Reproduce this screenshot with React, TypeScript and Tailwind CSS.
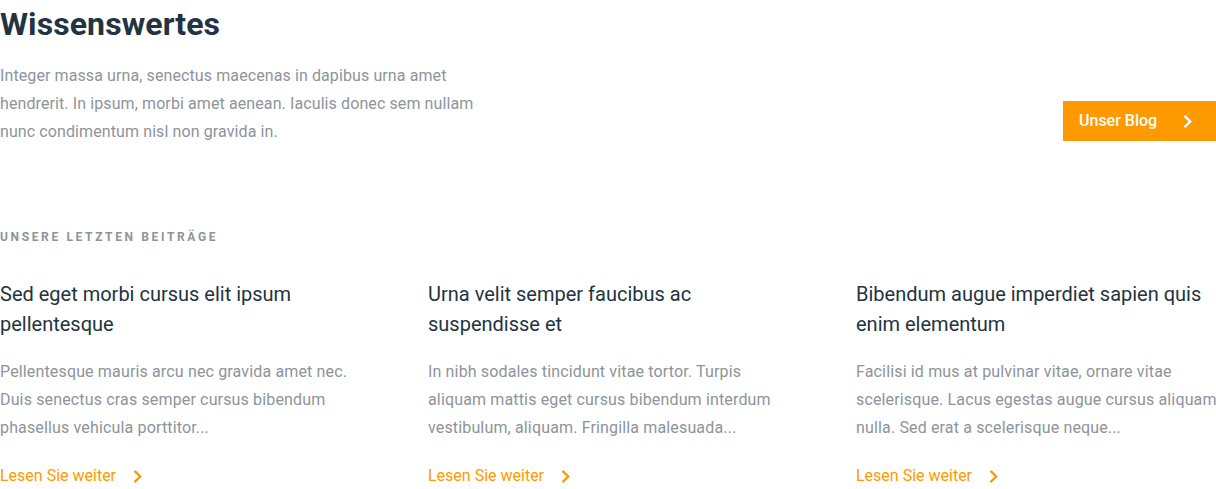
const posts = [
  {
    title: ['Sed eget morbi cursus elit ipsum', 'pellentesque'],
    text: [
      'Pellentesque mauris arcu nec gravida amet nec.',
      'Duis senectus cras semper cursus bibendum',
      'phasellus vehicula porttitor...',
    ],
  },
  {
    title: ['Urna velit semper faucibus ac', 'suspendisse et'],
    text: [
      'In nibh sodales tincidunt vitae tortor. Turpis',
      'aliquam mattis eget cursus bibendum interdum',
      'vestibulum, aliquam. Fringilla malesuada...',
    ],
  },
  {
    title: ['Bibendum augue imperdiet sapien quis', 'enim elementum'],
    text: [
      'Facilisi id mus at pulvinar vitae, ornare vitae',
      'scelerisque. Lacus egestas augue cursus aliquam',
      'nulla. Sed erat a scelerisque neque...',
    ],
  },
];

function Chevron({ className }: { className?: string }) {
  return (
    <svg viewBox="0 0 10 14" className={className} fill="none" stroke="currentColor" strokeWidth="2.2" strokeLinecap="square">
      <path d="M3 2.5 7.5 7 3 11.5" />
    </svg>
  );
}

export default function App() {
  return (
    <div className="h-[489px] w-[1216px] overflow-hidden bg-white font-['Roboto',sans-serif]">
      <div className="flex items-end justify-between">
        <div>
          <h1 className="text-[32px] leading-[48px] font-bold tracking-[0.1px] text-[#233341]">Wissenswertes</h1>
          <p className="mt-[14px] text-[16px] leading-[28px] tracking-[0.1px] whitespace-nowrap text-[#8d949a]">
            Integer massa urna, senectus maecenas in dapibus urna amet
            <br />
            hendrerit. In ipsum, morbi amet aenean. Iaculis donec sem nullam
            <br />
            nunc condimentum nisl non gravida in.
          </p>
        </div>
        <a className="mb-[5px] flex h-[40px] w-[153px] items-center bg-[#ff9900] pl-[16px] text-[16px] font-medium text-white">
          Unser Blog
          <Chevron className="ml-[25px] h-[15px] w-[11px]" />
        </a>
      </div>

      <h2 className="mt-[83px] text-[12px] leading-[16px] font-bold tracking-[0.22em] text-[#8d949a]">
        UNSERE LETZTEN BEITRÄGE
      </h2>

      <div className="mt-[34px] grid grid-cols-3 gap-x-[68px]">
        {posts.map((p) => (
          <article key={p.title[0]} className="min-w-0">
            <h3 className="text-[20px] leading-[30px] whitespace-nowrap text-[#233341]">
              {p.title[0]}
              <br />
              {p.title[1]}
            </h3>
            <p className="mt-[19px] text-[16px] leading-[28px] tracking-[0.15px] whitespace-nowrap text-[#8d949a]">
              {p.text[0]}
              <br />
              {p.text[1]}
              <br />
              {p.text[2]}
            </p>
            <a className="mt-[20px] flex items-center text-[16px] leading-[28px] text-[#ff9900]">
              Lesen Sie weiter
              <Chevron className="ml-[16px] h-[15px] w-[11px]" />
            </a>
          </article>
        ))}
      </div>
    </div>
  );
}
